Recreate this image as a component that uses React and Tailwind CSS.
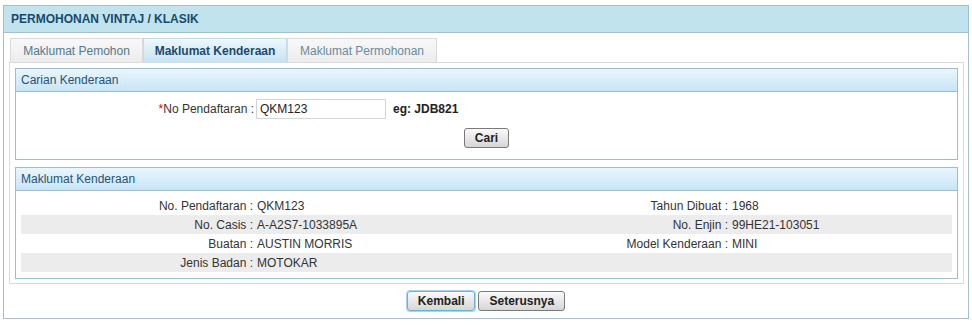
import React from 'react';

const rows = [
  ['No. Pendaftaran', 'QKM123', 'Tahun Dibuat', '1968'],
  ['No. Casis', 'A-A2S7-1033895A', 'No. Enjin', '99HE21-103051'],
  ['Buatan', 'AUSTIN MORRIS', 'Model Kenderaan', 'MINI'],
  ['Jenis Badan', 'MOTOKAR', '', ''],
];

function Fieldset({ title, children, className = '' }) {
  return (
    <div className={`border border-[#9dbccd] bg-white ${className}`}>
      <div className="h-[23px] flex items-center px-[5px] border-b border-[#9dbccd] bg-gradient-to-b from-[#eaf6fd] to-[#c7e5f7] text-[#2a5373]">
        {title}
      </div>
      {children}
    </div>
  );
}

function Button({ children, focus }) {
  return (
    <button
      className={`h-[20px] px-[10px] rounded-[3px] font-bold text-[#222] bg-gradient-to-b from-[#fafafa] to-[#d6d6d6] border ${
        focus ? 'border-[#6ab0dc] shadow-[0_0_0_1px_#a8d4ef]' : 'border-[#7a7a7a]'
      }`}
    >
      {children}
    </button>
  );
}

export default function App() {
  return (
    <div
      className="w-[972px] h-[325px] bg-white pl-[3px] pt-[5px] text-[12px] text-[#333]"
      style={{ fontFamily: '"Liberation Sans", Arial, sans-serif' }}
    >
      <div className="w-[966px] h-[314px] border border-[#a3c0cf] flex flex-col">
        {/* HEADER */}
        <div className="h-[27px] flex items-center pl-[7px] bg-[#c0e3ed] border-b border-[#a3c0cf] font-bold text-[#184a70]">
          PERMOHONAN VINTAJ / KLASIK
        </div>

        <div className="pl-[5px] pr-[3px] pt-[5px]">
          {/* TABS */}
          <div className="flex h-[24px] pl-px">
            <div className="w-[133px] flex items-center justify-center border border-b-0 border-[#dadada] bg-gradient-to-b from-[#f8f8f8] to-[#ececec] text-[#55798f]">
              Maklumat Pemohon
            </div>
            <div className="w-[144px] flex items-center justify-center border border-b-0 border-[#c3dbe8] bg-gradient-to-b from-[#eef7fc] to-[#c8e3f2] font-bold text-[#1d4a6d]">
              Maklumat Kenderaan
            </div>
            <div className="w-[150px] flex items-center justify-center border border-b-0 border-[#dadada] bg-gradient-to-b from-[#f8f8f8] to-[#ececec] text-[#6a8ba0]">
              Maklumat Permohonan
            </div>
          </div>

          {/* TAB PANEL */}
          <div className="w-[955px] border border-[#d9dcdd] px-[5px] pt-[5px] pb-[4px]">
            <Fieldset title="Carian Kenderaan" className="h-[92px]">
              <div className="flex items-center h-[20px] mt-[7px]">
                <div className="w-[240px] text-right pr-[2px]">
                  <span className="text-[#d00]">*</span>No Pendaftaran :
                </div>
                <div className="w-[130px] h-[20px] border border-[#d4d4d4] flex items-center px-[3px] text-[#222]">
                  QKM123
                </div>
                <div className="ml-[7px] font-bold text-[#222]">eg: JDB821</div>
              </div>
              <div className="flex justify-center mt-[9px]">
                <Button>Cari</Button>
              </div>
            </Fieldset>

            <Fieldset title="Maklumat Kenderaan" className="mt-[7px] h-[112px]">
              <div className="px-[5px] pt-[5px]">
                {rows.map((r, i) => (
                  <div
                    key={i}
                    className={`h-[19px] grid grid-cols-[232px_241px_234px_1fr] items-center ${
                      i % 2 ? 'bg-[#ececec]' : ''
                    }`}
                  >
                    <div className="text-right">{r[0]} :</div>
                    <div className="pl-[4px]">{r[1]}</div>
                    <div className="text-right">{r[2] && `${r[2]} :`}</div>
                    <div className="pl-[4px]">{r[3]}</div>
                  </div>
                ))}
              </div>
            </Fieldset>
          </div>

          {/* ACTIONS */}
          <div className="flex justify-center gap-[3px] mt-[7px] pr-[2px]">
            <Button focus>Kembali</Button>
            <Button>Seterusnya</Button>
          </div>
        </div>
      </div>
    </div>
  );
}
